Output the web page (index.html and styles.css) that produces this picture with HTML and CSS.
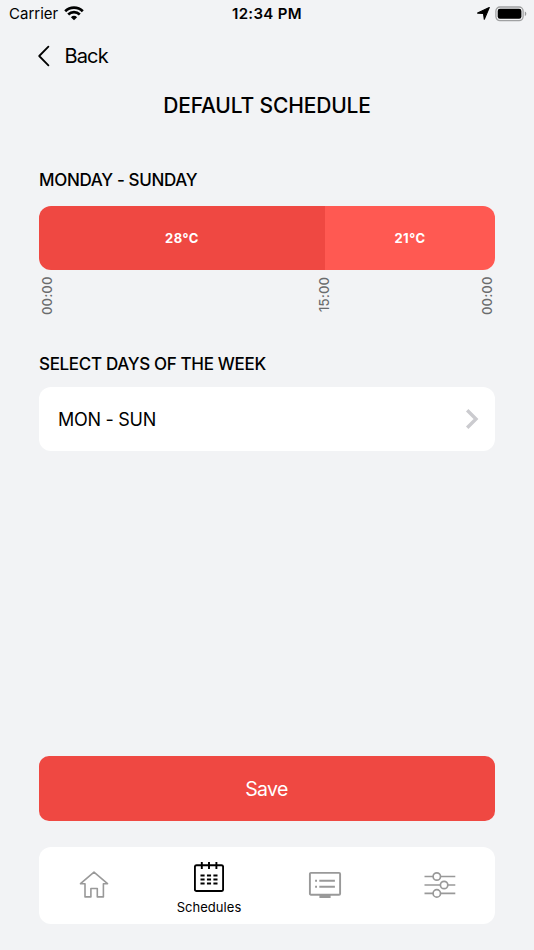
FILE: index.html
```html
<!DOCTYPE html>
<html lang="en">
<head>
<meta charset="utf-8">
<meta name="viewport" content="width=device-width, initial-scale=1">
<title>Default Schedule</title>
<link rel="stylesheet" href="styles.css">
</head>
<body>
<div class="screen">
  <header class="status">
    <div class="status-left">
      <span class="carrier">Carrier</span>
      <svg width="20" height="15" viewBox="0 0 20 15"><path d="M10 14.3 6.9 11.2A4.5 4.5 0 0 1 13.1 11.2Z" fill="#000"/><path d="M4.2 8.4A8.4 8.4 0 0 1 15.8 8.4M1.2 5.2A12.6 12.6 0 0 1 18.8 5.2" fill="none" stroke="#000" stroke-width="2.7"/></svg>
    </div>
    <span class="clock">12:34 PM</span>
    <div class="status-right">
      <svg width="13" height="13" viewBox="0 0 13 13"><path d="M.6 6.1 12.3.6 7.3 12.3 6.5 6.5Z" fill="#000" stroke="#000" stroke-width="1.1" stroke-linejoin="round"/></svg>
      <svg width="32" height="16" viewBox="0 0 32 16"><rect x=".9" y="1" width="27.2" height="13.6" rx="4" fill="none" stroke="#a0a1a2" stroke-width="1.3"/><rect x="2.7" y="2.8" width="23.7" height="10" rx="2.2"/><path d="M29.8 5.5Q31.3 6.1 31.3 7.8T29.8 10.1Z" fill="#999a9b"/></svg>
    </div>
  </header>
  <a class="back">
    <svg width="14" height="22" viewBox="0 0 14 22"><path d="M11.4 1.7 2.2 11 11.4 20.3" fill="none" stroke="#000" stroke-width="1.8" stroke-linecap="round" stroke-linejoin="round"/></svg>
    <span>Back</span>
  </a>
  <h1>DEFAULT SCHEDULE</h1>
  <main>
    <h2>MONDAY - SUNDAY</h2>
    <div class="bar">
      <div class="segment warm"><span>28°C</span></div>
      <div class="segment cool"><span>21°C</span></div>
    </div>
    <div class="times"><span class="time">00:00</span><span class="time mid">15:00</span><span class="time">00:00</span></div>
    <h2 class="select-title">SELECT DAYS OF THE WEEK</h2>
    <div class="select">
      <span>MON - SUN</span>
      <svg width="14" height="22" viewBox="0 0 14 22"><path d="M2.2 2.2 11 11 2.2 19.8" fill="none" stroke="#cbcbcf" stroke-width="3.4"/></svg>
    </div>
  </main>
  <button class="save">Save</button>
  <nav>
    <a class="tab"><svg width="30" height="28" viewBox="0 0 30 28"><path d="M15 1.2 1.5 12.7H6V25.9H11.9V17.5H18.3V25.9H24.4V12.7H28.5Z" fill="none" stroke="#999" stroke-width="1.6" stroke-linejoin="round"/></svg></a>
    <a class="tab active"><svg width="30" height="30" viewBox="0 0 30 30"><rect x=".9" y="3.2" width="28.2" height="25.8" rx="1.6" fill="none" stroke="#000" stroke-width="1.9"/><path d="M7.8 0V7M15 0V7M22.4 0V7" stroke="#000" stroke-width="1.9"/><path d="M6.5 13.5H23.5M6.5 17.5H23.5M6.5 21.5H23.5" stroke="#000" stroke-width="2.2" stroke-dasharray="4.1 2.35"/></svg><span>Schedules</span></a>
    <a class="tab"><svg width="34" height="28" viewBox="0 0 34 28"><g fill="none" stroke="#999" stroke-width="1.9"><rect x="1.9" y="1.9" width="30.2" height="21.8" rx="1"/><path d="M11.3 9.7H26.9M11.3 15.7H26.9M7.1 9.7H9M7.1 15.7H9"/></g><path d="M11.4 24H22.6V27H11.4Z" fill="#999"/></svg></a>
    <a class="tab sliders"><svg width="32" height="28" viewBox="0 0 32 28"><g fill="#fff" stroke="#999" stroke-width="1.7"><path d="M.5 5.5H31.3M.5 14H31.3M.5 22.4H31.3"/><circle cx="12.8" cy="5.5" r="3.7"/><circle cx="20.1" cy="14" r="3.7"/><circle cx="12.8" cy="22.4" r="3.7"/></g></svg></a>
  </nav>
</div>
</body>
</html>
```
FILE: styles.css
```css
* { box-sizing: border-box; }
body { margin: 0; background: #f2f3f5; color: #000; font-family: Inter, "Liberation Sans", sans-serif; }
svg { display: block; flex: none; }
h1, h2 { margin: 0; font-weight: 500; }
.screen { height: 950px; display: flex; flex-direction: column; }
.status { height: 28px; display: grid; grid-template-columns: 1fr auto 1fr; align-items: center; padding: 0 7px 0 9px; }
.status-left { display: flex; align-items: center; gap: 6px; font-size: 15px; height: 28px; }
.status-left svg { margin-top: -2px; }
.carrier { margin-top: -1px; }
.clock { margin: -1px 2px 0 0; font-size: 15px; font-weight: 600; letter-spacing: .35px; }
.status-right { display: flex; align-items: center; justify-content: flex-end; gap: 5px; margin-top: -1px; }
.back { display: flex; align-items: center; gap: 14px; height: 56px; padding-left: 36.5px; font-size: 20px; letter-spacing: -.85px; }
h1 { height: 44px; line-height: 44px; font-size: 21px; letter-spacing: -.15px; text-align: center; }
main { padding: 0 39px; margin-top: 40px; flex: 1; }
h2 { height: 24px; line-height: 24px; font-size: 17px; letter-spacing: -.33px; white-space: nowrap; }
.bar { display: flex; height: 64px; margin-top: 14px; border-radius: 12px; overflow: hidden; }
.segment { display: flex; align-items: center; justify-content: center; color: #fff; font-size: 13px; font-weight: 700; letter-spacing: .5px; }
.warm { width: 286px; background: #ef4842; }
.cool { flex: 1; background: #ff5952; }
.times { display: flex; height: 38px; margin-top: 7px; color: #6a6b6d; font-size: 13px; letter-spacing: .2px; }
.time { width: 16px; height: 38px; line-height: 16px; writing-mode: vertical-rl; transform: rotate(180deg); text-align: right; font-weight: 500; }
.time.mid { margin-left: 261px; margin-right: 147px; }
.select-title { margin-top: 37px; }
.select { height: 64px; margin-top: 11px; padding: 0 16px 0 19px; border-radius: 12px; background: #fff; display: flex; align-items: center; justify-content: space-between; font-size: 18px; letter-spacing: -.28px; }
.save { height: 65px; margin: 0 39px; padding: 1px 1px 0 0; border: 0; border-radius: 10px; background: #ef4842; color: #fff; font-family: inherit; font-size: 19.5px; letter-spacing: -.6px; }
nav { height: 77px; margin: 26px 39px; border-radius: 12px; background: #fff; display: grid; grid-template-columns: 109px 122px 110px 115px; }
.tab { display: flex; flex-direction: column; align-items: center; justify-content: center; gap: 7px; padding-bottom: 1px; font-size: 13px; letter-spacing: .05px; }
.active { justify-content: flex-start; padding-top: 15px; }
.sliders { padding-left: 5px; }
```
